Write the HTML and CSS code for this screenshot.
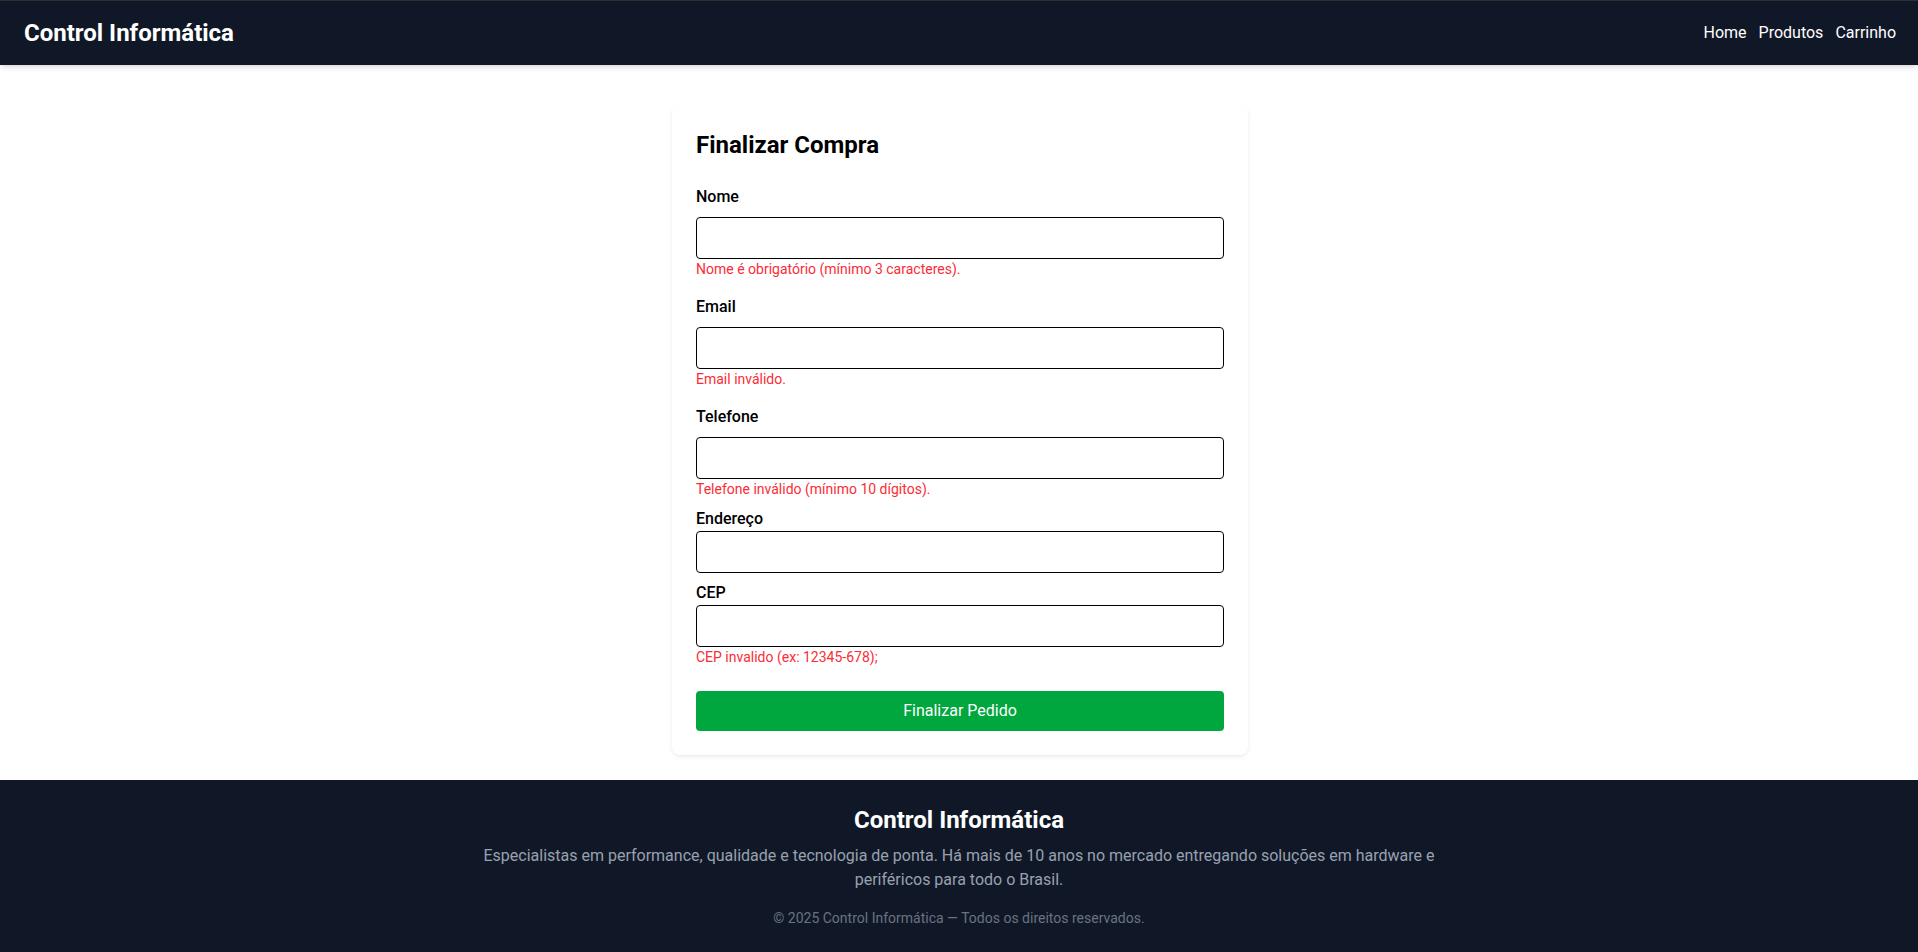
FILE: index.html
```html
<!DOCTYPE html>
<html lang="pt-BR">
<head>
<meta charset="utf-8">
<title>Control Informática</title>
<link rel="stylesheet" href="styles.css">
</head>
<body>
<header class="site-header">
  <h1 class="brand">Control Informática</h1>
  <nav class="nav">
    <a href="#" class="nav-link">Home</a>
    <a href="#" class="nav-link">Produtos</a>
    <a href="#" class="nav-link">Carrinho</a>
  </nav>
</header>

<main class="main">
  <form class="card">
    <h2 class="card-title">Finalizar Compra</h2>

    <div class="field field-lg">
      <label class="label label-spaced">Nome</label>
      <input class="input" type="text">
      <p class="error">Nome é obrigatório (mínimo 3 caracteres).</p>
    </div>

    <div class="field field-lg">
      <label class="label label-spaced">Email</label>
      <input class="input" type="email">
      <p class="error">Email inválido.</p>
    </div>

    <div class="field field-sm">
      <label class="label label-spaced">Telefone</label>
      <input class="input" type="tel">
      <p class="error">Telefone inválido (mínimo 10 dígitos).</p>
    </div>

    <div class="field field-sm">
      <label class="label">Endereço</label>
      <input class="input" type="text">
    </div>

    <div class="field field-xl">
      <label class="label">CEP</label>
      <input class="input" type="text">
      <p class="error">CEP invalido (ex: 12345-678);</p>
    </div>

    <button type="button" class="submit">Finalizar Pedido</button>
  </form>
</main>

<footer class="site-footer">
  <h3 class="footer-title">Control Informática</h3>
  <p class="footer-text">Especialistas em performance, qualidade e tecnologia de ponta. Há mais de 10 anos no mercado entregando soluções em hardware e periféricos para todo o Brasil.</p>
  <p class="footer-copy">© 2025 Control Informática — Todos os direitos reservados.</p>
</footer>
</body>
</html>
```

FILE: styles.css
```css
* {
  box-sizing: border-box;
}

html, body {
  margin: 0;
  padding: 0;
}

body {
  font-family: Roboto, "Liberation Sans", Arial, sans-serif;
  font-size: 16px;
  line-height: 24px;
  color: #000;
  background: #ffffff;
}

.site-header {
  position: relative;
  z-index: 2;
  height: 65px;
  display: flex;
  align-items: center;
  justify-content: space-between;
  padding: 0 22px 0 24px;
  background: #101828;
  border-top: 1px solid #2e2f33;
  box-shadow: 0 4px 6px -1px rgba(0,0,0,0.1), 0 2px 4px -2px rgba(0,0,0,0.1);
}

.brand {
  margin: 0;
  font-size: 24px;
  line-height: 32px;
  font-weight: 700;
  color: #ffffff;
}

.nav {
  display: flex;
  gap: 12px;
}

.nav-link {
  color: #ffffff;
  text-decoration: none;
  font-size: 16px;
  line-height: 24px;
}

.main {
  padding: 40px 0 25px 2px;
}

.card {
  width: 576px;
  margin: 0 auto;
  padding: 24px;
  background: #ffffff;
  border-radius: 8px;
  box-shadow: 0 2px 6px -1px rgba(0,0,0,0.08), 0 1px 3px -1px rgba(0,0,0,0.06);
}

.card-title {
  margin: 0 0 24px;
  font-size: 24px;
  line-height: 32px;
  font-weight: 700;
}

.field {
  display: flex;
  flex-direction: column;
}

.field-lg { margin-bottom: 16px; }
.field-sm { margin-bottom: 8px; }
.field-xl { margin-bottom: 24px; }

.label {
  display: block;
  font-weight: 500;
  font-size: 16px;
  line-height: 24px;
}

.label-spaced {
  margin-bottom: 8px;
}

.input {
  display: block;
  width: 100%;
  height: 42px;
  padding: 8px;
  border: 1px solid #000;
  border-radius: 4px;
  font-family: inherit;
  font-size: 16px;
  background: #fff;
  outline: none;
}

.error {
  margin: 0;
  font-size: 14px;
  line-height: 20px;
  color: #fb2c36;
}

.submit {
  display: block;
  width: 100%;
  height: 40px;
  border: none;
  border-radius: 4px;
  background: #00a63e;
  color: #ffffff;
  font-family: inherit;
  font-size: 16px;
  line-height: 24px;
  cursor: pointer;
}

.site-footer {
  background: #101828;
  color: #ffffff;
  text-align: center;
  padding: 24px 24px 24px;
}

.footer-title {
  margin: 0 0 8px;
  font-size: 24px;
  line-height: 32px;
  font-weight: 700;
}

.footer-text {
  max-width: 1024px;
  margin: 0 auto;
  color: #99a1af;
  font-size: 16px;
  line-height: 24px;
}

.footer-copy {
  margin: 16px 0 0;
  font-size: 14px;
  line-height: 20px;
  color: #6a7282;
}
```
